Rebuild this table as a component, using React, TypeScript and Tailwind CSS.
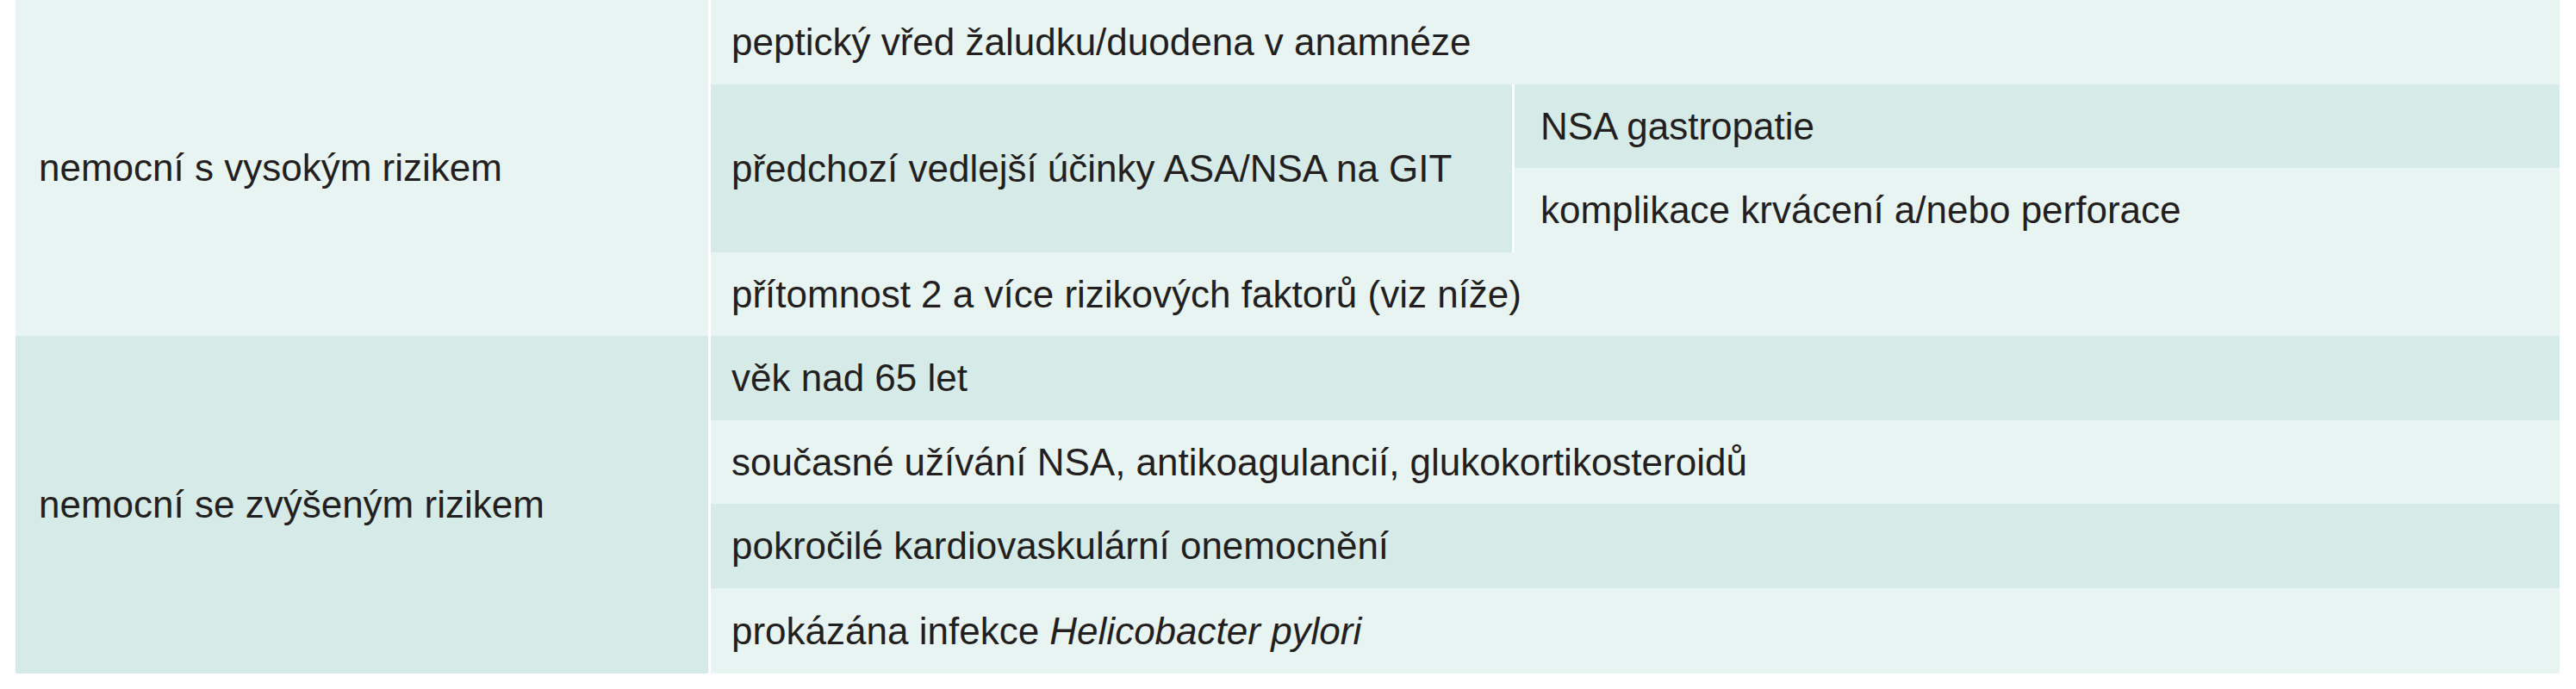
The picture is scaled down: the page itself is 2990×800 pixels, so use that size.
import React from "react";

const light = "bg-[#e8f4f2]";
const dark = "bg-[#d6eae7]";

export default function App() {
  const td = "align-middle text-[44px] leading-none text-[#231f20]";
  return (
    <div className="w-[2990px] h-[800px] bg-white pl-[18px] pr-[19px]" style={{ fontFamily: '"Liberation Sans", Arial, sans-serif' }}>
      <table className="w-full table-fixed border-separate border-spacing-0">
        <colgroup>
          <col className="w-[807px]" />
          <col className="w-[933px]" />
          <col />
        </colgroup>
        <tbody>
          <tr className="h-[98px]">
            <td rowSpan={4} className={`${td} ${light} border-r-[3px] border-white pl-[27px]`}>
              nemocní s vysokým rizikem
            </td>
            <td colSpan={2} className={`${td} ${light} pl-[24px]`}>
              peptický vřed žaludku/duodena v anamnéze
            </td>
          </tr>
          <tr className="h-[97px]">
            <td rowSpan={2} className={`${td} ${dark} border-r-[3px] border-white pl-[24px]`}>
              předchozí vedlejší účinky ASA/NSA na GIT
            </td>
            <td className={`${td} ${dark} pl-[30px]`}>NSA gastropatie</td>
          </tr>
          <tr className="h-[98px]">
            <td className={`${td} ${light} pl-[30px]`}>komplikace krvácení a/nebo perforace</td>
          </tr>
          <tr className="h-[97px]">
            <td colSpan={2} className={`${td} ${light} pl-[24px]`}>
              přítomnost 2 a více rizikových faktorů (viz níže)
            </td>
          </tr>
          <tr className="h-[98px]">
            <td rowSpan={4} className={`${td} ${dark} border-r-[3px] border-white pl-[27px]`}>
              nemocní se zvýšeným rizikem
            </td>
            <td colSpan={2} className={`${td} ${dark} pl-[24px]`}>věk nad 65 let</td>
          </tr>
          <tr className="h-[97px]">
            <td colSpan={2} className={`${td} ${light} pl-[24px]`}>
              současné užívání NSA, antikoagulancií, glukokortikosteroidů
            </td>
          </tr>
          <tr className="h-[98px]">
            <td colSpan={2} className={`${td} ${dark} pl-[24px]`}>pokročilé kardiovaskulární onemocnění</td>
          </tr>
          <tr className="h-[99px]">
            <td colSpan={2} className={`${td} ${light} pl-[24px]`}>
              prokázána infekce <i>Helicobacter pylori</i>
            </td>
          </tr>
        </tbody>
      </table>
    </div>
  );
}
